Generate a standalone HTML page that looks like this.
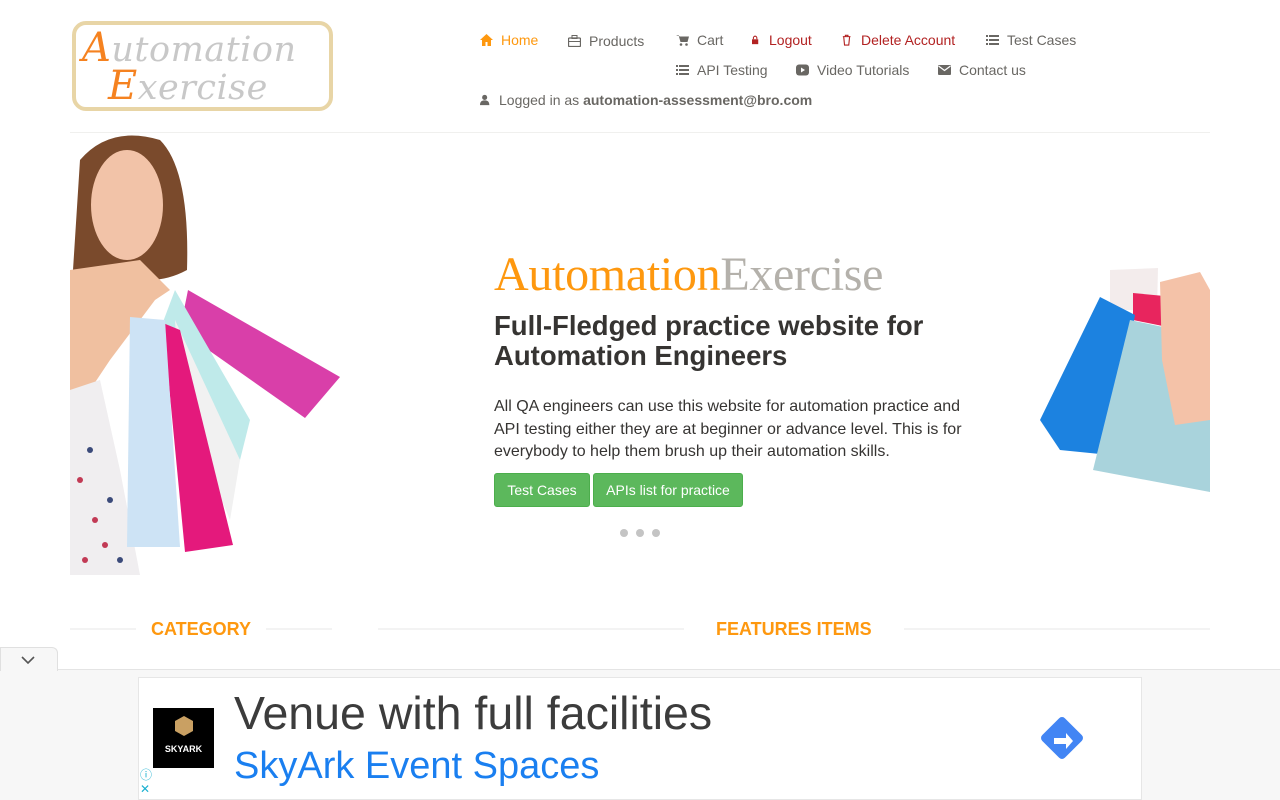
<!DOCTYPE html>
<html><head><meta charset="utf-8"><style>
*{margin:0;padding:0;box-sizing:border-box}
body{width:1280px;height:800px;overflow:hidden;background:#fff;font-family:"Liberation Sans",Arial,sans-serif;position:relative;color:#696763}
.nav{position:absolute;font-size:14px;color:#696763;white-space:nowrap}
.nav span{position:absolute;white-space:nowrap}
.ic{display:inline-block;width:13px;height:12px;vertical-align:-1px;margin-right:8px}
.hr{position:absolute;left:70px;width:1140px;top:132px;height:1px;background:#f0f0ee}
h1{position:absolute;left:494px;top:249px;font-family:"Liberation Serif",serif;font-weight:normal;font-size:48px;line-height:52px;letter-spacing:-0.3px}
h2{position:absolute;left:494px;top:311px;font-size:27.5px;line-height:30px;color:#363432;font-weight:bold}
p.d{position:absolute;left:494px;top:396px;width:490px;font-size:16px;line-height:22.5px;color:#363432}
.btn{position:absolute;top:473px;height:34px;background:#5cb85c;border:1px solid #4cae4c;color:#fff;font-size:14px;line-height:32px;text-align:center;border-radius:3px}
.dot{position:absolute;top:529px;width:8px;height:8px;border-radius:50%;background:#c4c4c4}
.title{position:absolute;top:619px;color:#fe980f;font-weight:bold;font-size:18px}
.ln{position:absolute;height:2px;background:#f3f3f3;top:628px}
.lg{position:absolute;font-family:'DejaVu Serif',serif;font-style:italic;font-size:35px;line-height:40px;color:#c8c8c8;letter-spacing:0.5px}
</style></head><body>
<div style="position:absolute;left:72px;top:21px;width:261px;height:90px;border:4px solid #e8d5a6;border-radius:14px;background:#fff"></div>
<div class="lg" style="left:82px;top:28px"><span style="color:#f58220;font-size:40px">A</span>utomation</div>
<div class="lg" style="left:108px;top:66px"><span style="color:#f58220;font-size:40px">E</span>xercise</div>

<div class="nav" style="left:0;top:0">
<span style="left:480px;top:32px;color:#fe980f"><svg class="ic" viewBox="0 0 13 12"><path d="M6.5 0L0 6h2v6h3.5V8h2v4H11V6h2z" fill="#fe980f"/></svg>Home</span>
<span style="left:568px;top:33px"><svg class="ic" viewBox="0 0 13 12"><rect x="0.5" y="3" width="12" height="8.5" rx="1" fill="none" stroke="#696763" stroke-width="1.3"/><rect x="4" y="0.5" width="5" height="3" fill="none" stroke="#696763"/><line x1="0.5" y1="6.5" x2="12.5" y2="6.5" stroke="#696763"/></svg>Products</span>
<span style="left:676px;top:32px"><svg class="ic" viewBox="0 0 13 12"><path d="M0 1h2.5l2 7h7l1.5-5.5H4" fill="#696763"/><circle cx="5" cy="10.5" r="1.3" fill="#696763"/><circle cx="10.5" cy="10.5" r="1.3" fill="#696763"/></svg>Cart</span>
<span style="left:752px;top:32px;color:#b22222"><svg class="ic" viewBox="0 0 13 12" style="width:9px"><rect x="0" y="5" width="9" height="7" fill="#b22222"/><path d="M2 5V3a2.5 2.5 0 015 0v2" fill="none" stroke="#b22222" stroke-width="1.5"/></svg>Logout</span>
<span style="left:842px;top:32px;color:#b22222"><svg class="ic" viewBox="0 0 13 12" style="width:11px"><path d="M1 2h9M4 2V0.5h3V2M2 2l1 10h5l1-10" fill="none" stroke="#b22222" stroke-width="1.3"/></svg>Delete Account</span>
<span style="left:986px;top:32px"><svg class="ic" viewBox="0 0 13 12"><path d="M0 1h2v2H0zM3 1h10v2H3zM0 5h2v2H0zM3 5h10v2H3zM0 9h2v2H0zM3 9h10v2H3z" fill="#696763"/></svg>Test Cases</span>
<span style="left:676px;top:62px"><svg class="ic" viewBox="0 0 13 12"><path d="M0 1h2v2H0zM3 1h10v2H3zM0 5h2v2H0zM3 5h10v2H3zM0 9h2v2H0zM3 9h10v2H3z" fill="#696763"/></svg>API Testing</span>
<span style="left:796px;top:62px"><svg class="ic" viewBox="0 0 13 12"><rect x="0" y="0.5" width="13" height="11" rx="3" fill="#696763"/><path d="M5 3.5v5l4-2.5z" fill="#fff"/></svg>Video Tutorials</span>
<span style="left:938px;top:62px"><svg class="ic" viewBox="0 0 13 12"><rect x="0" y="1" width="13" height="10" rx="1" fill="#696763"/><path d="M0.5 2l6 4.5 6-4.5" fill="none" stroke="#fff" stroke-width="1.2"/></svg>Contact us</span>
<span style="left:480px;top:92px"><svg class="ic" viewBox="0 0 13 12" style="width:11px"><circle cx="5.5" cy="3" r="3" fill="#696763"/><path d="M0 12c0-4 2-5.5 5.5-5.5S11 8 11 12z" fill="#696763"/></svg>Logged in as <b>automation-assessment@bro.com</b></span>
</div>
<div class="hr"></div>

<svg style="position:absolute;left:70px;top:133px" width="280" height="442" viewBox="70 133 280 442">
<path d="M73 270 L80 160 Q110 125 160 140 Q190 170 187 270 Q150 290 110 270Z" fill="#7a4a2c"/>
<ellipse cx="127" cy="205" rx="36" ry="55" fill="#f2c3a8"/>
<path d="M70 270 L140 260 L170 290 L155 300 L110 360 L90 390 L70 390Z" fill="#f0c0a0"/>
<path d="M70 390 L100 380 L120 470 L140 575 L70 575Z" fill="#f0eef0"/>
<g fill="#c23a55"><circle cx="80" cy="480" r="3"/><circle cx="95" cy="520" r="3"/><circle cx="105" cy="545" r="3"/><circle cx="85" cy="560" r="3"/></g>
<g fill="#3b4a7a"><circle cx="90" cy="450" r="3"/><circle cx="110" cy="500" r="3"/><circle cx="120" cy="560" r="3"/></g>
<path d="M188 290 L340 377 L305 418 L180 330Z" fill="#d93fa9"/>
<path d="M175 290 L250 420 L240 460 L160 330Z" fill="#bfeaea"/>
<path d="M175 320 L240 460 L230 520 L180 400Z" fill="#f1f1f1"/>
<path d="M163 323 L180 330 L233 545 L185 552Z" fill="#e4197c"/>
<path d="M130 317 L165 320 L180 547 L127 547Z" fill="#cde3f5"/>
</svg>

<svg style="position:absolute;left:1035px;top:265px" width="175" height="230" viewBox="1035 265 175 230">
<path d="M1110 270 L1158 268 L1157 310 L1110 310Z" fill="#f3ecec"/>
<path d="M1133 293 L1207 300 L1207 335 L1133 320Z" fill="#e8255e"/>
<path d="M1100 297 L1135 315 L1110 455 L1060 450 L1040 420Z" fill="#1c82e0"/>
<path d="M1130 320 L1210 337 L1210 492 L1093 470Z" fill="#a9d3dc"/>
<path d="M1160 282 L1200 272 L1210 290 L1210 420 L1175 425 L1162 360Z" fill="#f4c2a8"/>
</svg>

<h1><span style="color:#fe980f">Automation</span><span style="color:#b4b1ab">Exercise</span></h1>
<h2>Full-Fledged practice website for<br>Automation Engineers</h2>
<p class="d">All QA engineers can use this website for automation practice and API testing either they are at beginner or advance level. This is for everybody to help them brush up their automation skills.</p>
<div class="btn" style="left:494px;width:96px">Test Cases</div>
<div class="btn" style="left:593px;width:150px">APIs list for practice</div>
<div class="dot" style="left:620px"></div><div class="dot" style="left:636px"></div><div class="dot" style="left:652px"></div>

<div class="ln" style="left:70px;width:66px"></div>
<div class="title" style="left:151px">CATEGORY</div>
<div class="ln" style="left:266px;width:66px"></div>
<div class="ln" style="left:378px;width:306px"></div>
<div class="title" style="left:716px">FEATURES ITEMS</div>
<div class="ln" style="left:904px;width:306px"></div>

<div style="position:absolute;left:0;top:669px;width:1280px;height:131px;background:#f7f7f7;border-top:1px solid #e4e4e4"></div>
<div style="position:absolute;left:0;top:647px;width:58px;height:24px;background:#f7f7f7;border:1px solid #e0e0e0;border-bottom:none;border-radius:0 6px 0 0"><svg width="58" height="24"><path d="M21 9l6 6 6-6" fill="none" stroke="#555" stroke-width="1.6"/></svg></div>
<div style="position:absolute;left:138px;top:677px;width:1004px;height:123px;background:#fff;border:1px solid #e6e6e6"></div>
<div style="position:absolute;left:153px;top:708px;width:61px;height:60px;background:#000;color:#fff;font-size:9px;font-weight:bold;text-align:center;padding-top:36px">SKYARK</div>
<svg style="position:absolute;left:175px;top:716px" width="18" height="20"><path d="M9 0L18 5V15L9 20L0 15V5Z" fill="#c9a063"/></svg>
<div style="position:absolute;left:234px;top:686px;font-size:46.5px;color:#3c3c3c;line-height:54px">Venue with full facilities</div>
<div style="position:absolute;left:234px;top:742px;font-size:38px;color:#1a7ff0;line-height:48px">SkyArk Event Spaces</div>
<div style="position:absolute;left:140px;top:768px;color:#1ab0d0;font-size:12px;line-height:14px">ⓘ<br>✕</div>
<svg style="position:absolute;left:1038px;top:714px" width="48" height="48" viewBox="0 0 48 48"><rect x="8" y="8" width="32" height="32" rx="4" transform="rotate(45 24 24)" fill="#4285f4"/><path d="M16 30v-6h12v-5l7 8-7 8v-5h-8v0" fill="#fff"/></svg>
</body></html>
